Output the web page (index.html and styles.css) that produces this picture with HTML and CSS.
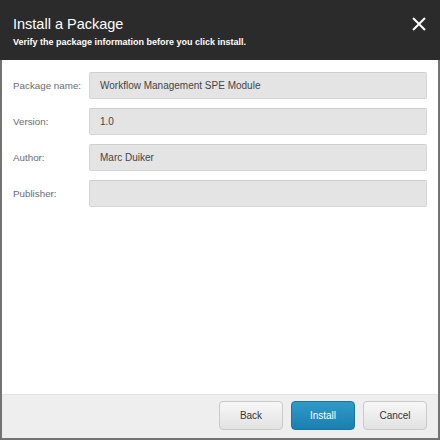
FILE: index.html
```html
<!DOCTYPE html>
<html>
<head>
<meta charset="utf-8">
<link rel="stylesheet" href="styles.css">
</head>
<body>
<div class="dialog">
  <div class="header">
    <div class="titles">
      <div class="title">Install a Package</div>
      <div class="subtitle">Verify the package information before you click install.</div>
    </div>
    <svg class="close" width="14" height="14" viewBox="0 0 14 14"><path d="M1 1L13 13M13 1L1 13" stroke="#fff" stroke-width="2" fill="none"/></svg>
  </div>
  <div class="body">
    <div class="row"><div class="label">Package name:</div><div class="field">Workflow Management SPE Module</div></div>
    <div class="row"><div class="label">Version:</div><div class="field">1.0</div></div>
    <div class="row"><div class="label">Author:</div><div class="field">Marc Duiker</div></div>
    <div class="row"><div class="label">Publisher:</div><div class="field"></div></div>
  </div>
  <div class="footer">
    <button class="btn">Back</button>
    <button class="btn primary">Install</button>
    <button class="btn">Cancel</button>
  </div>
</div>
</body>
</html>
```
FILE: styles.css
```css
html, body { margin: 0; padding: 0; }
body { font-family: "Liberation Sans", Arial, sans-serif; background: #fff; }
.dialog {
  width: 440px; height: 440px; box-sizing: border-box;
  border: 2px solid #737373; border-top: 0;
  display: flex; flex-direction: column; background: #fff;
}
.header {
  height: 60px; background: #2b2b2b; color: #fff;
  display: flex; justify-content: space-between; align-items: flex-start;
  padding: 0 12px 0 11px; margin: 0 -2px; padding-left: 13px; padding-right: 14px;
}
.titles { padding-top: 16px; }
.title { font-size: 14.5px; line-height: 17px; }
.subtitle { font-size: 9px; font-weight: bold; line-height: 11px; margin-top: 4px; }
.close { margin-top: 17px; }
.body { flex: 1; padding: 12px 11px 0 11px; display: flex; flex-direction: column; gap: 9px; }
.row { display: flex; align-items: center; }
.label { width: 76px; font-size: 9.8px; color: #6b6b6b; }
.field {
  flex: 1; height: 27px; box-sizing: border-box;
  background: #e4e4e4; border: 1px solid #d6d6d6; border-top-color: #cfcfcf; border-radius: 2px;
  font-size: 10px; color: #444; padding-left: 10px; line-height: 25px;
}
.footer {
  height: 44px; box-sizing: border-box; background: #eeeeee; border-top: 1px solid #e4e4e4;
  display: flex; justify-content: flex-end; align-items: flex-start; gap: 8px;
  padding: 6px 11px 0 0;
}
.btn {
  width: 64px; height: 29px; border-radius: 4px; border: 1px solid #c9c9c9;
  background: linear-gradient(#f7f7f7, #e2e2e2); color: #333;
  font-family: "Liberation Sans", Arial, sans-serif; font-size: 10px; padding: 0;
}
.btn.primary {
  border-color: #1c739f; color: #fff;
  background: linear-gradient(#2f9ac9, #1b7fae);
}
```
